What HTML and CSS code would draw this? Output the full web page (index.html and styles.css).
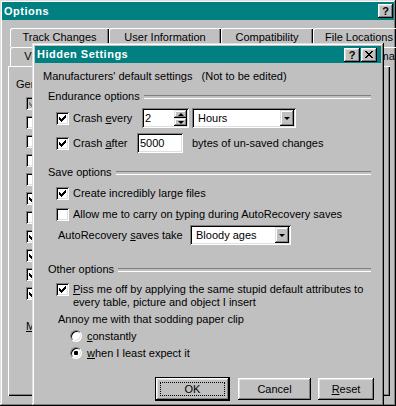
FILE: index.html
```html
<!DOCTYPE html>
<html lang="en">
<head>
    <meta charset="UTF-8">
    <title>Options</title>
    <link rel="stylesheet" href="styles.css">
</head>
<body>
    <div class="window options">
        <div class="titlebar">
            <span class="title">Options</span>
            <span class="cap-btn help">?</span>
        </div>

        <div class="tabs">
            <div class="tab-row back">
                <div class="tab t-track">Track Changes</div>
                <div class="tab t-user">User Information</div>
                <div class="tab t-compat">Compatibility</div>
                <div class="tab t-files">File Locations</div>
            </div>
            <div class="tab-row front">
                <div class="tab t-view">View</div>
                <div class="tab t-spell">Spelling &amp; Grammar</div>
            </div>
        </div>

        <!-- only the left edge of this panel shows beside the dialog -->
        <div class="panel">
            <div class="panel-label">General options</div>
            <div class="plist">
                <div class="prow"><span class="cb mixed"><svg viewBox="0 0 13 13" width="13" height="13"><path d="M3 5h1v3H3zM4 6h1v3H4zM5 7h1v3H5zM6 6h1v3H6zM7 5h1v3H7zM8 4h1v3H8zM9 3h1v3H9z"/></svg></span></div>
                <div class="prow"><span class="cb"></span></div>
                <div class="prow"><span class="cb"></span></div>
                <div class="prow"><span class="cb"></span></div>
                <div class="prow"><span class="cb"></span></div>
                <div class="prow"><span class="cb"><svg viewBox="0 0 13 13" width="13" height="13"><path d="M3 5h1v3H3zM4 6h1v3H4zM5 7h1v3H5zM6 6h1v3H6zM7 5h1v3H7zM8 4h1v3H8zM9 3h1v3H9z"/></svg></span></div>
                <div class="prow"><span class="cb"></span></div>
                <div class="prow"><span class="cb"><svg viewBox="0 0 13 13" width="13" height="13"><path d="M3 5h1v3H3zM4 6h1v3H4zM5 7h1v3H5zM6 6h1v3H6zM7 5h1v3H7zM8 4h1v3H8zM9 3h1v3H9z"/></svg></span></div>
                <div class="prow"><span class="cb"><svg viewBox="0 0 13 13" width="13" height="13"><path d="M3 5h1v3H3zM4 6h1v3H4zM5 7h1v3H5zM6 6h1v3H6zM7 5h1v3H7zM8 4h1v3H8zM9 3h1v3H9z"/></svg></span></div>
                <div class="prow"><span class="cb"><svg viewBox="0 0 13 13" width="13" height="13"><path d="M3 5h1v3H3zM4 6h1v3H4zM5 7h1v3H5zM6 6h1v3H6zM7 5h1v3H7zM8 4h1v3H8zM9 3h1v3H9z"/></svg></span></div>
                <div class="prow"><span class="cb"><svg viewBox="0 0 13 13" width="13" height="13"><path d="M3 5h1v3H3zM4 6h1v3H4zM5 7h1v3H5zM6 6h1v3H6zM7 5h1v3H7zM8 4h1v3H8zM9 3h1v3H9z"/></svg></span></div>
            </div>
            <div class="units"><u>M</u>easurement units:</div>
        </div>
    </div>

    <!-- the dialog sits on top of the Options window -->
    <div class="window dialog">
        <div class="titlebar dlg-title">
            <span class="title">Hidden Settings</span>
            <span class="cap-btns">
                <span class="cap-btn">?</span>
                <span class="cap-btn"><svg viewBox="0 0 8 7" width="8" height="7"><path d="M0 0h2v1H0zM6 0h2v1H6zM1 1h2v1H1zM5 1h2v1H5zM2 2h4v1H2zM3 3h2v1H3zM2 4h4v1H2zM1 5h2v1H1zM5 5h2v1H5zM0 6h2v1H0zM6 6h2v1H6z"/></svg></span>
            </span>
        </div>

        <div class="content">
            <div class="note">Manufacturers' default settings &nbsp;&nbsp;(Not to be edited)</div>

            <div class="group">Endurance options</div>
            <div class="row">
                <span class="cb"><svg viewBox="0 0 13 13" width="13" height="13"><path d="M3 5h1v3H3zM4 6h1v3H4zM5 7h1v3H5zM6 6h1v3H6zM7 5h1v3H7zM8 4h1v3H8zM9 3h1v3H9z"/></svg></span>
                <span class="lbl-every">Crash <u>e</u>very</span>
                <div class="field spin">
                    <span class="val">2</span>
                    <span class="spin-btns">
                        <span class="sbtn"><i class="up"></i></span>
                        <span class="sbtn"><i class="down"></i></span>
                    </span>
                </div>
                <div class="field combo c-hours">
                    <span class="val">Hours</span>
                    <span class="drop-btn"><i class="down"></i></span>
                </div>
            </div>
            <div class="row">
                <span class="cb"><svg viewBox="0 0 13 13" width="13" height="13"><path d="M3 5h1v3H3zM4 6h1v3H4zM5 7h1v3H5zM6 6h1v3H6zM7 5h1v3H7zM8 4h1v3H8zM9 3h1v3H9z"/></svg></span>
                <span class="lbl-after">Crash <u>a</u>fter</span>
                <div class="field bytes"><span class="val">5000</span></div>
                <span class="after-text">bytes of un-saved changes</span>
            </div>

            <div class="group g-save">Save options</div>
            <div class="row small r-large">
                <span class="cb"><svg viewBox="0 0 13 13" width="13" height="13"><path d="M3 5h1v3H3zM4 6h1v3H4zM5 7h1v3H5zM6 6h1v3H6zM7 5h1v3H7zM8 4h1v3H8zM9 3h1v3H9z"/></svg></span>
                <span>Create incredibly large files</span>
            </div>
            <div class="row small r-allow">
                <span class="cb"></span>
                <span>Allow me to carry on <u>t</u>yping during AutoRecovery saves</span>
            </div>
            <div class="row r-auto">
                <span class="lbl-auto">AutoRecovery <u>s</u>aves take</span>
                <div class="field combo c-ages">
                    <span class="val">Bloody ages</span>
                    <span class="drop-btn"><i class="down"></i></span>
                </div>
            </div>

            <div class="group g-other">Other options</div>
            <div class="row-wrap">
                <span class="cb"><svg viewBox="0 0 13 13" width="13" height="13"><path d="M3 5h1v3H3zM4 6h1v3H4zM5 7h1v3H5zM6 6h1v3H6zM7 5h1v3H7zM8 4h1v3H8zM9 3h1v3H9z"/></svg></span>
                <span class="multi"><u>P</u>iss me off by applying the same stupid default attributes to<br>every table, picture and object I insert</span>
            </div>
            <div class="annoy">Annoy me with that sodding paper clip</div>
            <div class="row small radio-row r-first">
                <span class="radio"></span>
                <span><u>c</u>onstantly</span>
            </div>
            <div class="row small radio-row">
                <span class="radio on"></span>
                <span><u>w</u>hen I least expect it</span>
            </div>

            <div class="buttons">
                <div class="btn default"><span class="focus">OK</span></div>
                <div class="btn b-cancel">Cancel</div>
                <div class="btn b-reset"><span><u>R</u>eset</span></div>
            </div>
        </div>
    </div>
</body>
</html>
```

FILE: styles.css
```css
* {
    box-sizing: border-box;
}
body {
    margin: 0;
    width: 396px;
    height: 406px;
    overflow: hidden;
    position: relative;
    background: #c0c0c0;
    font: 11px/13px "Liberation Sans", Arial, sans-serif;
    color: #000;
}
u {
    text-underline-offset: 1px;
}

/* window frame */
.window {
    background: #c0c0c0;
    box-shadow: inset -1px -1px #000, inset 1px 1px #dfdfdf, inset -2px -2px #808080, inset 2px 2px #fff;
}
.titlebar {
    display: flex;
    align-items: center;
    justify-content: space-between;
    background: #008080;
    color: #fff;
}
.title {
    font-weight: bold;
    letter-spacing: 0.5px;
}
.cap-btn {
    width: 16px;
    height: 14px;
    display: flex;
    align-items: center;
    justify-content: center;
    background: #c0c0c0;
    color: #000;
    font-weight: bold;
    font-size: 11px;
    line-height: 12px;
    box-shadow: inset -1px -1px #000, inset 1px 1px #fff, inset -2px -2px #808080, inset 2px 2px #dfdfdf;
}
.cap-btn svg {
    display: block;
}

/* Options window (behind) */
.options {
    width: 396px;
    height: 406px;
    padding: 2px;
}
.options .titlebar {
    height: 18px;
    padding: 0 1px 0 2px;
}
.cap-btn.help {
    width: 15px;
}
.tabs {
    margin-top: 8px;
}
.tab-row {
    display: flex;
    height: 19px;
    padding-left: 8px;
}
.tab {
    flex: none;
    height: 19px;
    padding-top: 3px;
    line-height: 12px;
    text-align: center;
    white-space: nowrap;
    border-top-left-radius: 2px;
    box-shadow: inset 1px 1px #fff, inset -1px 0 #000, inset -2px 0 #808080;
}
.t-track { width: 99px; }
.t-user { width: 112px; }
.t-compat { width: 92px; }
.t-files { width: 92px; }
.t-view { width: 52px; }
.t-spell {
    width: 112px;
    margin-left: auto;
    margin-right: -11px;
}
.panel {
    height: 330px;
    margin: 0 4px 0 6px;
    padding: 12px 0 0 8px;
    box-shadow: inset 1px 1px #fff, inset -1px -1px #000, inset -2px -2px #808080;
}
.panel-label, .plist, .units {
    width: 17px;
    overflow: hidden;
    white-space: nowrap;
}
.plist {
    margin-top: 3px;
    padding-left: 10px;
}
.prow {
    display: flex;
    align-items: center;
    height: 19px;
}
.units {
    margin-top: 17px;
    padding-left: 10px;
}

/* controls */
.cb {
    flex: none;
    width: 13px;
    height: 13px;
    margin-right: 4px;
    background: #fff;
    box-shadow: inset 1px 1px #808080, inset -1px -1px #fff, inset 2px 2px #000, inset -2px -2px #dfdfdf;
}
.cb svg {
    display: block;
}
.cb.mixed {
    background: #c0c0c0;
    fill: #808080;
}
.radio {
    flex: none;
    width: 12px;
    height: 12px;
    margin-right: 5px;
    border-radius: 50%;
    border: 1px solid;
    border-color: #808080 #fff #fff #808080;
    background: #fff;
    box-shadow: inset 1px 1px #000, inset -1px -1px #dfdfdf;
    display: flex;
    align-items: center;
    justify-content: center;
}
.radio.on::after {
    content: "";
    width: 4px;
    height: 4px;
    border-radius: 1px;
    background: #000;
}
.field {
    flex: none;
    display: flex;
    align-items: center;
    height: 20px;
    padding: 2px;
    background: #fff;
    box-shadow: inset 1px 1px #808080, inset -1px -1px #fff, inset 2px 2px #000, inset -2px -2px #dfdfdf;
}
.field .val {
    padding-left: 1px;
}
.spin {
    width: 47px;
}
.spin-btns {
    margin-left: auto;
    display: flex;
    flex-direction: column;
}
.sbtn, .drop-btn {
    display: flex;
    align-items: center;
    justify-content: center;
    background: #c0c0c0;
    box-shadow: inset -1px -1px #000, inset 1px 1px #dfdfdf, inset -2px -2px #808080, inset 2px 2px #fff;
}
.sbtn {
    width: 13px;
    height: 8px;
}
.drop-btn {
    width: 14px;
    height: 16px;
    margin-left: auto;
}
i.up, i.down {
    width: 0;
    height: 0;
    border-left: 3px solid transparent;
    border-right: 3px solid transparent;
}
i.up {
    border-bottom: 3px solid #000;
}
i.down {
    border-top: 3px solid #000;
}
.combo .val {
    padding-left: 4px;
}
.c-hours {
    width: 104px;
    margin-left: 3px;
}
.c-ages {
    width: 101px;
}
.bytes {
    width: 46px;
}

/* Hidden Settings dialog */
.dialog {
    position: absolute;
    left: 32px;
    top: 43px;
    width: 352px;
    height: 363px;
    padding: 3px;
}
.dlg-title {
    height: 17px;
    padding: 0 4px 0 2px;
}
.cap-btns {
    display: flex;
    gap: 1px;
}
.content {
    padding: 7px 10px 0 8px;
    white-space: nowrap;
}
.group {
    display: flex;
    align-items: center;
    margin: 7px 0 0 5px;
}
.group::after {
    content: "";
    flex: 1;
    height: 2px;
    margin-left: 4px;
    border-top: 1px solid #808080;
    border-bottom: 1px solid #fff;
}
.g-save {
    margin-top: 13px;
}
.g-other {
    margin-top: 18px;
}
.row {
    display: flex;
    align-items: center;
    height: 20px;
    margin: 5px 0 0 13px;
}
.row.small {
    height: 16px;
}
.lbl-every {
    width: 69px;
}
.lbl-after {
    width: 64px;
}
.after-text {
    margin-left: 9px;
}
.r-large {
    margin-top: 6px;
}
.r-auto {
    margin: 3px 0 0 15px;
}
.lbl-auto {
    width: 132px;
}
.row-wrap {
    display: flex;
    align-items: flex-start;
    margin: 7px 0 0 13px;
}
.annoy {
    margin: 4px 0 0 15px;
}
.radio-row {
    margin: 1px 0 0 27px;
}
.radio-row.r-first {
    margin-top: 2px;
}
.buttons {
    display: flex;
    justify-content: flex-end;
    margin: 17px -3px 0 0;
}
.btn {
    height: 22px;
    display: flex;
    align-items: center;
    justify-content: center;
    background: #c0c0c0;
    box-shadow: inset -1px -1px #000, inset 1px 1px #fff, inset -2px -2px #808080, inset 2px 2px #dfdfdf;
}
.btn.default {
    width: 73px;
    padding: 4px;
    box-shadow: 0 0 0 1px #000, inset -1px -1px #000, inset 1px 1px #fff, inset -2px -2px #808080, inset 2px 2px #dfdfdf;
}
.focus {
    flex: 1;
    align-self: stretch;
    display: flex;
    align-items: center;
    justify-content: center;
    border: 1px dotted #000;
}
.b-cancel {
    width: 73px;
    margin-left: 9px;
}
.b-reset {
    width: 56px;
    margin-left: 7px;
}
```
